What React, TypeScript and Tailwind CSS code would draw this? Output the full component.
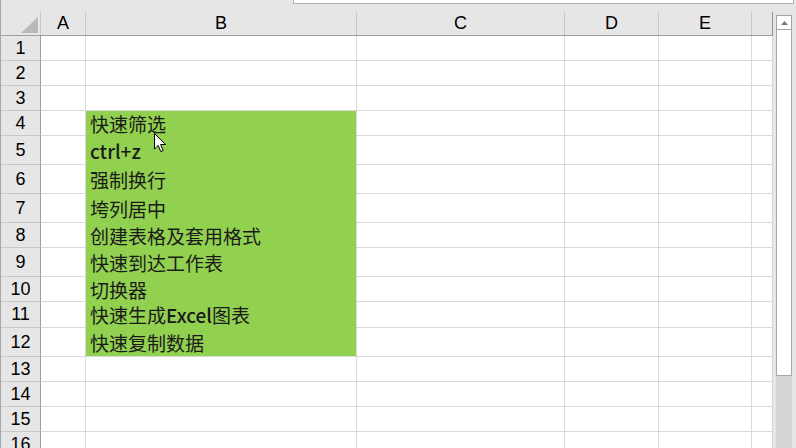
import type { ReactNode } from "react";

const cols = [
  { label: "A", w: "w-[45px]" },
  { label: "B", w: "w-[271px]" },
  { label: "C", w: "w-[208px]" },
  { label: "D", w: "w-[94px]" },
  { label: "E", w: "w-[93px]" },
  { label: "", w: "w-[21px]" },
];

const rowHeights = [
  "h-[25px]", "h-[25px]", "h-[25px]", "h-[25px]", "h-[29px]", "h-[29px]", "h-[29px]", "h-[25px]",
  "h-[29px]", "h-[25px]", "h-[26px]", "h-[29px]", "h-[25px]", "h-[25px]", "h-[25px]", "h-[25px]",
];

const latin = "font-medium";

const items: Record<number, ReactNode> = {
  4: "快速筛选",
  5: <span className={latin}>ctrl+z</span>,
  6: "强制换行",
  7: "垮列居中",
  8: "创建表格及套用格式",
  9: "快速到达工作表",
  10: "切换器",
  11: (
    <>
      快速生成<span className={latin}>Excel</span>图表
    </>
  ),
  12: "快速复制数据",
};

const cellFont = { fontFamily: '"Noto Sans CJK SC", "Noto Sans", sans-serif' };

function cn(...xs: (string | false | undefined)[]) {
  return xs.filter(Boolean).join(" ");
}

function Row({ n, h }: { n: number; h: string }) {
  const green = n >= 4 && n <= 12;
  return (
    <div className={cn("flex shrink-0", h)}>
      <div className="w-[40px] shrink-0 flex items-center justify-center bg-[#e6e6e6] border-r border-b border-r-[#9e9e9e] border-b-[#c8c8c8] text-[18px] text-black font-['Liberation_Sans',sans-serif]">
        {n}
      </div>
      {cols.map((c, i) => {
        const fill = i === 1 && green;
        return (
          <div
            key={i}
            className={cn(
              c.w,
              "shrink-0 border-r border-b border-[#d9d9d9]",
              fill && "bg-[#92d050] flex items-center pl-[4px] text-[19px] leading-none text-[#1a1a1a] whitespace-nowrap",
              fill && n < 12 && "border-b-[#92d050]",
              !fill && "bg-white"
            )}
            style={fill ? cellFont : undefined}
          >
            {fill ? items[n] : null}
          </div>
        );
      })}
    </div>
  );
}

export default function App() {
  return (
    <div className="relative w-[796px] h-[448px] overflow-hidden bg-[#e6e6e6] border-l border-[#a6a6a6] flex flex-col">
      {/* formula bar edge */}
      <div className="h-[12px] shrink-0 flex">
        <div className="w-[292px]" />
        <div className="w-[501px] h-[4px] bg-white border-x border-b border-[#b4b4b4]" />
      </div>

      <div className="flex flex-1 min-h-0">
        {/* sheet */}
        <div className="w-[772px] shrink-0 flex flex-col border-r border-[#8f8f8f]">
          {/* column headers */}
          <div className="flex h-[24px] shrink-0 border-b border-[#9e9e9e]">
            <div className="w-[40px] shrink-0 relative border-r border-[#c8c8c8]">
              <svg className="absolute left-[20px] top-[5px]" width="17" height="16" viewBox="0 0 17 16">
                <polygon points="17,0 17,16 0,16" fill="#b9b9b9" />
              </svg>
            </div>
            {cols.map((c, i) => (
              <div
                key={i}
                className={cn(
                  c.w,
                  "shrink-0 flex items-center justify-center text-[18px] text-black font-['Liberation_Sans',sans-serif]",
                  i < cols.length - 1 && "border-r border-[#c8c8c8]"
                )}
              >
                {c.label}
              </div>
            ))}
          </div>
          {rowHeights.map((h, i) => (
            <Row key={i} n={i + 1} h={h} />
          ))}
        </div>

        {/* vertical scrollbar */}
        <div className="w-[23px] shrink-0 flex flex-col pl-[3px] pr-[4px] pt-[3px] bg-[#e6e6e6]">
          <div className="h-[15px] shrink-0 bg-white border border-[#a6a6a6] flex items-center justify-center">
            <svg width="7" height="4" viewBox="0 0 7 4">
              <polygon points="3.5,0 7,4 0,4" fill="#7a7a7a" />
            </svg>
          </div>
          <div className="h-[346px] shrink-0 bg-white border border-t-0 border-[#a6a6a6]" />
          <div className="flex-1 bg-[#d6d6d6]" />
        </div>
      </div>

      {/* mouse pointer */}
      <svg className="absolute left-[153px] top-[133px]" width="13" height="20" viewBox="0 0 13 20">
        <path d="M0.5 0.5 L0.5 16 L4.2 12.4 L6.8 18.6 L9.2 17.6 L6.6 11.5 L11.6 11.5 Z" fill="white" stroke="black" strokeWidth="1" strokeLinejoin="miter" />
      </svg>
    </div>
  );
}
